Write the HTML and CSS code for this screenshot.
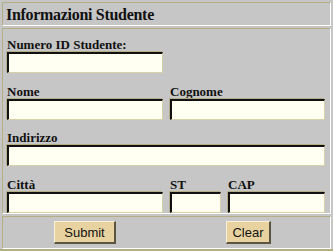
FILE: index.html
```html
<!DOCTYPE html>
<html lang="it">
<head>
    <meta charset="UTF-8">
    <title>Informazioni Studente</title>
    <link rel="stylesheet" href="styles.css">
</head>
<body>
    <form class="panel">
        <div class="section head">Informazioni Studente</div>

        <div class="section fields">
            <div class="field span1">
                <label>Numero ID Studente:</label>
                <input type="text">
            </div>
            <div class="field span1">
                <label>Nome</label>
                <input type="text">
            </div>
            <div class="field span2">
                <label>Cognome</label>
                <input type="text">
            </div>
            <div class="field span3">
                <label>Indirizzo</label>
                <input type="text">
            </div>
            <div class="field">
                <label>Città</label>
                <input type="text">
            </div>
            <div class="field">
                <label>ST</label>
                <input type="text">
            </div>
            <div class="field">
                <label>CAP</label>
                <input type="text">
            </div>
        </div>

        <div class="section buttons">
            <button type="button" class="submit">Submit</button>
            <button type="button" class="clear">Clear</button>
        </div>
    </form>
</body>
</html>
```

FILE: styles.css
```css
body {
    margin: 0;
    background-color: #c6c6c6;
    font-family: "Liberation Serif", serif;
}

.panel {
    width: 333px;
    height: 251px;
    box-sizing: border-box;
    padding: 2px 2px 0 2px;
    display: flex;
    flex-direction: column;
    gap: 2px;
    border-bottom: 2px solid #b5ad84;
}

.section {
    border-top: 1px solid #b5ad84;
    border-left: 1px solid #b5ad84;
    border-bottom: 1px solid #fff;
    border-right: 1px solid #fff;
}

.head {
    height: 24px;
    box-sizing: border-box;
    padding: 3px 0 0 3px;
    font-size: 16px;
    line-height: 18px;
    letter-spacing: -0.3px;
    font-weight: bold;
    color: #111;
}

.fields {
    display: grid;
    grid-template-columns: 156px 51px 97px;
    column-gap: 7px;
    row-gap: 10px;
    padding: 8px 0 0 4px;
    height: 186px;
    box-sizing: border-box;
}

.field {
    display: flex;
    flex-direction: column;
}

.span1 { grid-column: 1 / 2; }
.span2 { grid-column: 2 / 4; }
.span3 { grid-column: 1 / 4; }

.field label {
    font-size: 13px;
    font-weight: bold;
    height: 15px;
    color: #111;
}

.field input {
    height: 21px;
    box-sizing: border-box;
    margin: 0;
    background-color: #fffff2;
    border-top: 2px solid #111;
    border-left: 2px solid #111;
    border-bottom: 1px solid #d8d0a8;
    border-right: 1px solid #d8d0a8;
    box-shadow: -1px -1px 0 #b5ad84;
}

.buttons {
    flex: 1;
    display: flex;
    align-items: center;
    padding: 0 0 0 51px;
}

.buttons button {
    font-family: "Liberation Sans", sans-serif;
    font-size: 13px;
    height: 23px;
    padding: 0;
    background-color: #e8d3a0;
    border-top: 1px solid #f8f0d8;
    border-left: 1px solid #f8f0d8;
    border-bottom: 2px solid #5a5440;
    border-right: 2px solid #5a5440;
    color: #111;
}

.submit {
    width: 62px;
}

.clear {
    width: 45px;
    margin-left: 110px;
}
```
